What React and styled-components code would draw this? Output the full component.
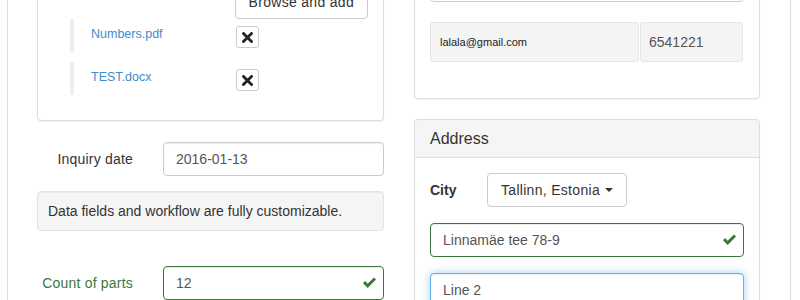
import React from "react";
import styled, { createGlobalStyle } from "styled-components";

const GlobalStyle = createGlobalStyle`
  html, body {
    margin: 0;
    padding: 0;
    overflow: hidden;
    background: #fff;
  }
  body {
    font-family: "Liberation Sans", Arial, sans-serif;
    font-size: 14px;
    color: #333;
  }
  * { box-sizing: border-box; }
`;

const Page = styled.div`
  margin: -70px 0 0 7px;
  width: 784px;
  border: 1px solid #ddd;
  padding: 21px 29px 40px 29px;
  display: grid;
  grid-template-columns: 347px 346px;
  column-gap: 30px;
  align-items: start;
`;

const Column = styled.div`
  display: flex;
  flex-direction: column;
  padding-top: ${(p) => p.$offset || 0}px;
`;

const Panel = styled.div`
  border: 1px solid #ddd;
  border-radius: 4px;
  background: #fff;
  margin-bottom: ${(p) => p.$gap ?? 20}px;
  box-shadow: 0 1px 1px rgba(0, 0, 0, 0.05);
`;

const PanelHeading = styled.div`
  background: #f5f5f5;
  border-bottom: 1px solid #ddd;
  border-radius: 3px 3px 0 0;
  padding: 10px 15px;
  font-size: 16px;
  line-height: 17px;
  color: #333;
`;

const PanelBody = styled.div`
  padding: 15px;
  display: flex;
  flex-direction: column;
`;

const Button = styled.button`
  font-family: inherit;
  font-size: 14px;
  letter-spacing: 0.3px;
  color: #333;
  background: #fff;
  border: 1px solid #ccc;
  border-radius: 4px;
  height: 34px;
  padding: 0 13px;
  display: inline-flex;
  align-items: center;
  gap: 5px;
  cursor: pointer;
`;

const BrowseRow = styled.div`
  display: flex;
  justify-content: flex-end;
`;

const FileList = styled.ul`
  list-style: none;
  margin: 0;
  padding: 0 0 0 17px;
`;

const FileItem = styled.li`
  display: grid;
  grid-template-columns: 145px auto;
  align-items: center;
  height: 33px;
  margin-bottom: 10px;
  border-left: 4px solid #eee;
  padding-left: 18px;
`;

const FileLink = styled.a`
  color: #428bca;
  font-size: 12.5px;
  text-decoration: none;
  margin: -4px 0 0 -1px;
`;

const SmallButton = styled.button`
  width: 23px;
  height: 22px;
  padding: 0;
  background: #fff;
  border: 1px solid #ccc;
  border-radius: 3px;
  display: flex;
  align-items: center;
  justify-content: center;
  margin: 3px 0 0 -1px;
`;

const FormRow = styled.div`
  display: grid;
  grid-template-columns: 126px 1fr;
  align-items: center;
  margin-bottom: ${(p) => p.$gap ?? 15}px;
`;

const Label = styled.label`
  text-align: right;
  padding-right: 30px;
  letter-spacing: 0.2px;
  color: ${(p) => (p.$valid ? "#3c763d" : "#333")};
`;

const InputWrap = styled.div`
  position: relative;
  margin-bottom: ${(p) => p.$gap ?? 0}px;
`;

const Input = styled.input`
  display: block;
  width: 100%;
  height: 34px;
  padding: 6px 12px;
  font-family: inherit;
  font-size: 14px;
  color: #555;
  background: #fff;
  border: 1px solid
    ${(p) => (p.$state === "valid" ? "#3c763d" : p.$state === "focus" ? "#66afe9" : "#ccc")};
  border-radius: 4px;
  outline: none;
  box-shadow: ${(p) =>
    p.$state === "focus"
      ? "inset 0 1px 1px rgba(0,0,0,.075), 0 0 8px rgba(102,175,233,.6)"
      : "inset 0 1px 1px rgba(0,0,0,.075)"};
  padding-right: ${(p) => (p.$state === "valid" ? 34 : 12)}px;
`;

const Feedback = styled.span`
  position: absolute;
  right: 7px;
  top: 0;
  height: 34px;
  display: flex;
  align-items: center;
`;

const Well = styled.div`
  background: #f5f5f5;
  border: 1px solid #e3e3e3;
  border-radius: 4px;
  padding: 9px 10px;
  line-height: 20px;
  margin-bottom: 35px;
  box-shadow: inset 0 1px 1px rgba(0, 0, 0, 0.05);
`;

const StaticRow = styled.div`
  display: grid;
  grid-template-columns: 209px 104px;
  margin: 20px 0 21px;
`;

const StaticCell = styled.div`
  height: 40px;
  display: flex;
  align-items: center;
  background: #f4f4f4;
  border: 1px solid #e6e6e6;
  border-radius: 3px;
  padding-left: ${(p) => (p.$small ? 9 : 8)}px;
  font-size: ${(p) => (p.$small ? 11 : 14)}px;
  color: ${(p) => (p.$small ? "#222" : "#555")};
  margin-left: ${(p) => (p.$small ? 0 : 1)}px;
`;

const CityRow = styled.div`
  display: flex;
  align-items: center;
  margin-bottom: 16px;
`;

const CityLabel = styled.span`
  font-weight: 700;
  width: 57px;
`;

const Caret = styled.span`
  width: 0;
  height: 0;
  border-top: 4px solid #333;
  border-left: 4px solid transparent;
  border-right: 4px solid transparent;
`;

const OkIcon = () => (
  <svg width="15" height="12" viewBox="0 0 14 12">
    <path d="M0.5 6.2 L2.6 4.1 L5.2 6.7 L11.4 0.5 L13.5 2.6 L5.2 10.9 Z" fill="#3c763d" />
  </svg>
);

const RemoveIcon = () => (
  <svg width="11" height="11" viewBox="0 0 11 11">
    <path d="M1.5 1.5 L9.5 9.5 M9.5 1.5 L1.5 9.5" stroke="#222" strokeWidth="2.8" strokeLinecap="square" />
  </svg>
);

const files = ["Numbers.pdf", "TEST.docx"];

const App = () => {
  return (
    <>
      <GlobalStyle />
      <Page>
        <Column $offset={17}>
          <Panel $gap={21}>
            <PanelBody>
              <BrowseRow>
                <Button>Browse and add</Button>
              </BrowseRow>
              <FileList>
                {files.map((f) => (
                  <FileItem key={f}>
                    <FileLink href="#">{f}</FileLink>
                    <SmallButton>
                      <RemoveIcon />
                    </SmallButton>
                  </FileItem>
                ))}
              </FileList>
            </PanelBody>
          </Panel>
          <FormRow>
            <Label>Inquiry date</Label>
            <Input defaultValue="2016-01-13" />
          </FormRow>
          <Well>Data fields and workflow are fully customizable.</Well>
          <FormRow>
            <Label $valid>Count of parts</Label>
            <InputWrap>
              <Input $state="valid" defaultValue="12" />
              <Feedback>
                <OkIcon />
              </Feedback>
            </InputWrap>
          </FormRow>
        </Column>

        <Column>
          <Panel>
            <PanelBody>
              <Input defaultValue="Lala Lalala" />
              <StaticRow>
                <StaticCell $small>lalala@gmail.com</StaticCell>
                <StaticCell>6541221</StaticCell>
              </StaticRow>
            </PanelBody>
          </Panel>
          <Panel>
            <PanelHeading>Address</PanelHeading>
            <PanelBody>
              <CityRow>
                <CityLabel>City</CityLabel>
                <Button>
                  Tallinn, Estonia <Caret />
                </Button>
              </CityRow>
              <InputWrap $gap={16}>
                <Input $state="valid" defaultValue="Linnamäe tee 78-9" />
                <Feedback>
                  <OkIcon />
                </Feedback>
              </InputWrap>
              <InputWrap $gap={16}>
                <Input $state="focus" defaultValue="Line 2" />
              </InputWrap>
              <InputWrap>
                <Input placeholder="Postal code" />
              </InputWrap>
            </PanelBody>
          </Panel>
        </Column>
      </Page>
    </>
  );
};

export default App;
